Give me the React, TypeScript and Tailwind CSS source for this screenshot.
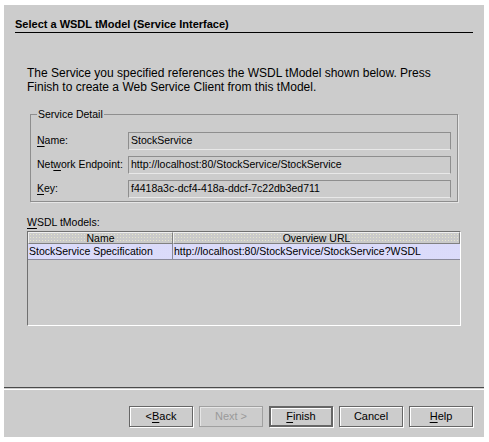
import React from 'react';

const font = "font-['Liberation_Sans',Arial,sans-serif]";

// letter underlined as a keyboard mnemonic
const Mn: React.FC<{ children: React.ReactNode }> = ({ children }) => (
  <span className="underline underline-offset-2 decoration-1">{children}</span>
);

const Field: React.FC<{ value: string }> = ({ value }) => (
  <div className="flex-1 h-[18px] flex items-center px-[2px] border border-[#8e8e8e] border-b-[#e8e8e8] text-[10.5px] text-black whitespace-nowrap overflow-hidden">
    {value}
  </div>
);

const DetailRow: React.FC<{ label: React.ReactNode; value: string }> = ({ label, value }) => (
  <div className="flex items-center h-[18px]">
    <div className="w-[92px] pl-[1px] text-[10.5px] whitespace-nowrap">{label}</div>
    <Field value={value} />
  </div>
);

const WizardButton: React.FC<{
  children: React.ReactNode;
  disabled?: boolean;
  isDefault?: boolean;
}> = ({ children, disabled, isDefault }) => (
  <button
    disabled={disabled}
    className={`w-[64px] h-[21px] flex items-center justify-center text-[11px] bg-[#cccccc] ${
      disabled
        ? 'border border-[#a0a0a0] text-[#9a9a9a] shadow-[inset_1px_1px_0_#e6e6e6]'
        : isDefault
        ? 'border-2 border-[#666] text-black shadow-[inset_1px_1px_0_#fff,1px_1px_0_#fff]'
        : 'border border-[#666] text-black shadow-[inset_1px_1px_0_#fff,1px_1px_0_#fff]'
    }`}
  >
    {children}
  </button>
);

const headerBg =
  'bg-[#cacaca] bg-[radial-gradient(circle,#e4e4cc_0.5px,transparent_0.8px)] bg-[length:3px_3px]';
const rowBg =
  'bg-[#bcbcf0] bg-[radial-gradient(circle,#ececff_0.6px,transparent_0.9px)] bg-[length:2px_2px]';

export default function App() {
  return (
    <div className={`w-[489px] h-[442px] bg-white pt-[5px] pl-[4px] pr-[5px] pb-[5px] ${font}`}>
      <div className="w-full h-full bg-[#cccccc] flex flex-col text-black">
        {/* Title with rule */}
        <div className="ml-[11px] mr-[11px] pt-[13px] border-b border-black">
          <div className="text-[11px] font-bold leading-[13px] pb-[1px]">
            Select a WSDL tModel (Service Interface)
          </div>
        </div>

        {/* Description */}
        <p className="ml-[23px] mt-[33px] text-[12px] leading-[14px]">
          The Service you specified references the WSDL tModel shown below. Press
          <br />
          Finish to create a Web Service Client from this tModel.
        </p>

        {/* Service detail group */}
        <fieldset className="ml-[26px] w-[428px] mt-[14px] h-[94px] border border-[#8e8e8e] shadow-[1px_1px_0_#e6e6e6] px-[5px]">
          <legend className="ml-[1px] text-[10.5px] px-[1px] leading-[12px]">Service Detail</legend>
          <div className="flex flex-col gap-[6px] mt-[12px] pr-[1px]">
            <DetailRow label={<><Mn>N</Mn>ame:</>} value="StockService" />
            <DetailRow label={<>Net<Mn>w</Mn>ork Endpoint:</>} value="http://localhost:80/StockService/StockService" />
            <DetailRow label={<><Mn>K</Mn>ey:</>} value="f4418a3c-dcf4-418a-ddcf-7c22db3ed711" />
          </div>
        </fieldset>

        {/* tModel table */}
        <div className="ml-[23px] mt-[14px] text-[10.5px] leading-[13px]">
          <Mn>W</Mn>SDL tModels:
        </div>
        <div className="ml-[23px] mt-[2px] w-[434px] h-[95px] border border-[#707070] border-r-white border-b-white">
          <div className="flex h-[12px] text-[10.5px] leading-[10px]">
            <div className={`w-[145px] text-center border border-[#808080] border-t-[#f0f0f0] border-l-[#f0f0f0] ${headerBg}`}>
              Name
            </div>
            <div className={`flex-1 text-center border border-[#808080] border-t-[#f0f0f0] border-l-[#f0f0f0] ${headerBg}`}>
              Overview URL
            </div>
          </div>
          <div className={`flex h-[16px] items-center text-[10.5px] border-b border-[#8a8a9a] ${rowBg}`}>
            <div className="w-[145px] pl-[1px] whitespace-nowrap border-r border-[#8a8a9a]">
              StockService Specification
            </div>
            <div className="flex-1 pl-[1px] whitespace-nowrap">
              http://localhost:80/StockService/StockService?WSDL
            </div>
          </div>
        </div>

        <div className="flex-1" />

        {/* Separator */}
        <div className="h-[3px] border-t border-[#4a4a4a] border-b border-b-white" />

        {/* Navigation buttons */}
        <div className="flex justify-end gap-[6px] mr-[11px] mt-[16px] mb-[10px]">
          <WizardButton>&lt; <Mn>B</Mn>ack</WizardButton>
          <WizardButton disabled>Next &gt;</WizardButton>
          <WizardButton isDefault><Mn>F</Mn>inish</WizardButton>
          <WizardButton>Cancel</WizardButton>
          <WizardButton><Mn>H</Mn>elp</WizardButton>
        </div>
      </div>
    </div>
  );
}
